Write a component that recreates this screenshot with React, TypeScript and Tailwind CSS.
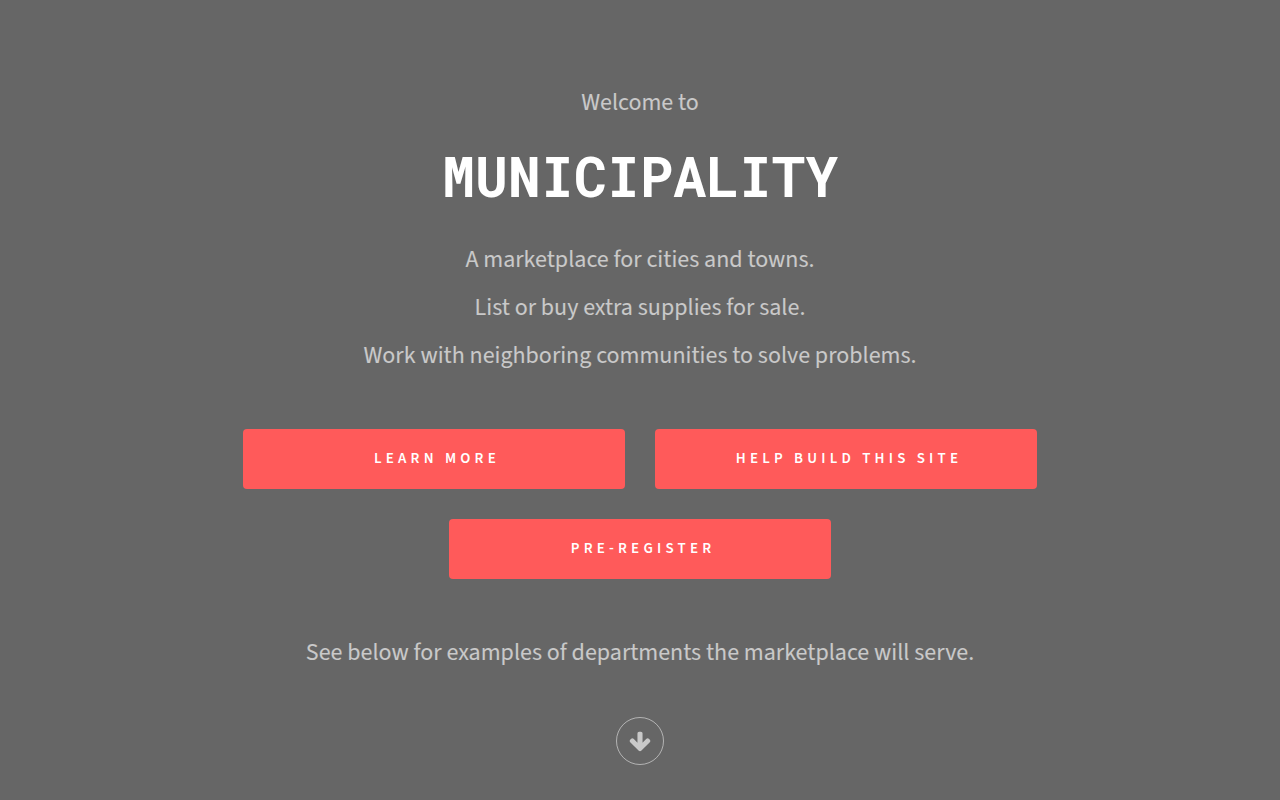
const actions = [
  { label: "Learn More", href: "#learn-more" },
  { label: "Help Build This Site", href: "#help-build" },
  { label: "Pre-Register", href: "#pre-register" },
];

const taglines = [
  "A marketplace for cities and towns.",
  "List or buy extra supplies for sale.",
  "Work with neighboring communities to solve problems.",
];

function ArrowDown() {
  return (
    <svg viewBox="0 -64 1664 1792" className="h-6 w-[22px]" fill="currentColor" aria-hidden="true">
      <path d="M1611 832q0 53-37 90l-651 652q-39 37-91 37-53 0-90-37l-651-652q-38-36-38-90 0-53 38-91l74-75q39-37 91-37 53 0 90 37l294 294v-704q0-52 38-90t90-38h128q52 0 90 38t38 90v704l294-294q37-37 90-37 52 0 91 37l75 75q37 39 37 91z" />
    </svg>
  );
}

export default function App() {
  return (
    <main className="flex min-h-screen flex-col items-center bg-[#666666] px-6 pt-[79px] pb-[35px] text-center font-['Source_Sans_3','Noto_Sans_CJK_JP',sans-serif] text-[24px] leading-[48px] text-white/65">
      <p>Welcome to</p>
      <h1 className="mt-[13px] font-['Roboto_Mono','DejaVu_Sans_Mono',monospace] text-[55px] leading-[72px] font-bold text-white uppercase">
        Municipality
      </h1>
      <div className="mt-6">
        {taglines.map((line) => (
          <p key={line}>{line}</p>
        ))}
      </div>
      <nav className="mt-[49px] flex w-full max-w-[824px] flex-wrap justify-center gap-[30px]">
        {actions.map(({ label, href }) => (
          <a
            key={label}
            href={href}
            className="h-[60px] w-full max-w-[382px] rounded bg-[#ff5a5a] pl-1.5 text-[15px] leading-[60px] font-semibold tracking-[0.28em] text-white uppercase"
          >
            {label}
          </a>
        ))}
      </nav>
      <p className="mt-[50px]">See below for examples of departments the marketplace will serve.</p>
      <a
        href="#departments"
        aria-label="See departments"
        className="mt-10 flex size-12 items-center justify-center rounded-full border border-white/50"
      >
        <ArrowDown />
      </a>
    </main>
  );
}
